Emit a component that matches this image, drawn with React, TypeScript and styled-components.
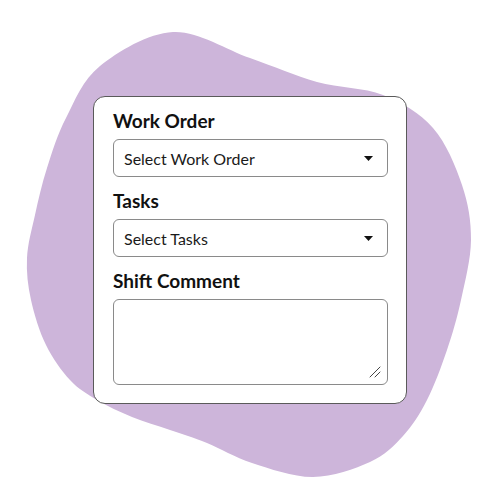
import * as React from "react";
import styled, { createGlobalStyle } from "styled-components";

const GlobalStyle = createGlobalStyle`
  html, body {
    margin: 0;
    padding: 0;
    background: #ffffff;
  }
  body {
    font-family: Lato, "Noto Sans", sans-serif;
    color: #111111;
  }
`;

const Stage = styled.div`
  position: relative;
  width: 500px;
  height: 500px;
  display: flex;
  align-items: center;
  justify-content: center;
  overflow: hidden;
`;

const Blob = styled.svg`
  position: absolute;
  inset: 0;
  width: 500px;
  height: 500px;
`;

const Card = styled.form`
  position: relative;
  box-sizing: border-box;
  width: 314px;
  height: 308px;
  background: #ffffff;
  border: 1px solid #5a5a5a;
  border-radius: 12px;
  padding: 13px 18px 0 19px;
  display: flex;
  flex-direction: column;
`;

const Label = styled.label`
  display: block;
  font-size: 19px;
  font-weight: 700;
  line-height: 22px;
  color: #111111;
  margin: 0 0 7px;
`;

const Field = styled.div`
  margin-bottom: 13px;
`;

const Select = styled.div`
  box-sizing: border-box;
  height: 38px;
  border: 1px solid #8a8a8a;
  border-radius: 6px;
  display: flex;
  align-items: center;
  justify-content: space-between;
  padding: 0 14px 0 10px;
  font-size: 16px;
  color: #1a1a1a;
`;

const Caret = styled.svg`
  width: 9px;
  height: 5px;
  flex: none;
`;

const CommentBox = styled.div`
  position: relative;
`;

const Comment = styled.textarea`
  box-sizing: border-box;
  display: block;
  width: 100%;
  height: 86px;
  border: 1px solid #8a8a8a;
  border-radius: 6px;
  padding: 8px 10px;
  font-family: inherit;
  font-size: 16px;
  outline: none;
  resize: none;
`;

const Grip = styled.svg`
  position: absolute;
  right: 7px;
  bottom: 7px;
  width: 12px;
  height: 12px;
  pointer-events: none;
`;

const blobPoints: [number, number][] = [
  [173, 32], [250, 58], [317, 82], [383, 95], [433, 128], [462, 185],
  [471, 240], [461, 300], [447, 350], [427, 400], [403, 436], [370, 462],
  [313, 477], [252, 463], [207, 443], [170, 430], [132, 417], [97, 400],
  [70, 380], [46, 345], [31, 300], [27, 258], [35, 215], [47, 168],
  [66, 118], [100, 66],
];

function smoothPath(pts: [number, number][]) {
  const n = pts.length;
  let d = `M${pts[0][0]},${pts[0][1]}`;
  for (let i = 0; i < n; i++) {
    const p0 = pts[(i - 1 + n) % n];
    const p1 = pts[i];
    const p2 = pts[(i + 1) % n];
    const p3 = pts[(i + 2) % n];
    const c1x = p1[0] + (p2[0] - p0[0]) / 6;
    const c1y = p1[1] + (p2[1] - p0[1]) / 6;
    const c2x = p2[0] - (p3[0] - p1[0]) / 6;
    const c2y = p2[1] - (p3[1] - p1[1]) / 6;
    d += ` C${c1x.toFixed(1)},${c1y.toFixed(1)} ${c2x.toFixed(1)},${c2y.toFixed(1)} ${p2[0]},${p2[1]}`;
  }
  return d + "Z";
}

const Dropdown = ({ placeholder }: { placeholder: string }) => (
  <Select>
    <span>{placeholder}</span>
    <Caret viewBox="0 0 9 5">
      <path d="M0 0h9L4.5 5z" fill="#111" />
    </Caret>
  </Select>
);

export default function App() {
  return (
    <Stage>
      <GlobalStyle />
      <Blob viewBox="0 0 500 500">
        <path d={smoothPath(blobPoints)} fill="#cdb5da" />
      </Blob>
      <Card>
        <Field>
          <Label>Work Order</Label>
          <Dropdown placeholder="Select Work Order" />
        </Field>
        <Field>
          <Label>Tasks</Label>
          <Dropdown placeholder="Select Tasks" />
        </Field>
        <Field>
          <Label>Shift Comment</Label>
          <CommentBox>
            <Comment />
            <Grip viewBox="0 0 12 12">
              <path d="M1 11L11 1M6 11l5-5" stroke="#444" strokeWidth="1" strokeLinecap="round" />
            </Grip>
          </CommentBox>
        </Field>
      </Card>
    </Stage>
  );
}
